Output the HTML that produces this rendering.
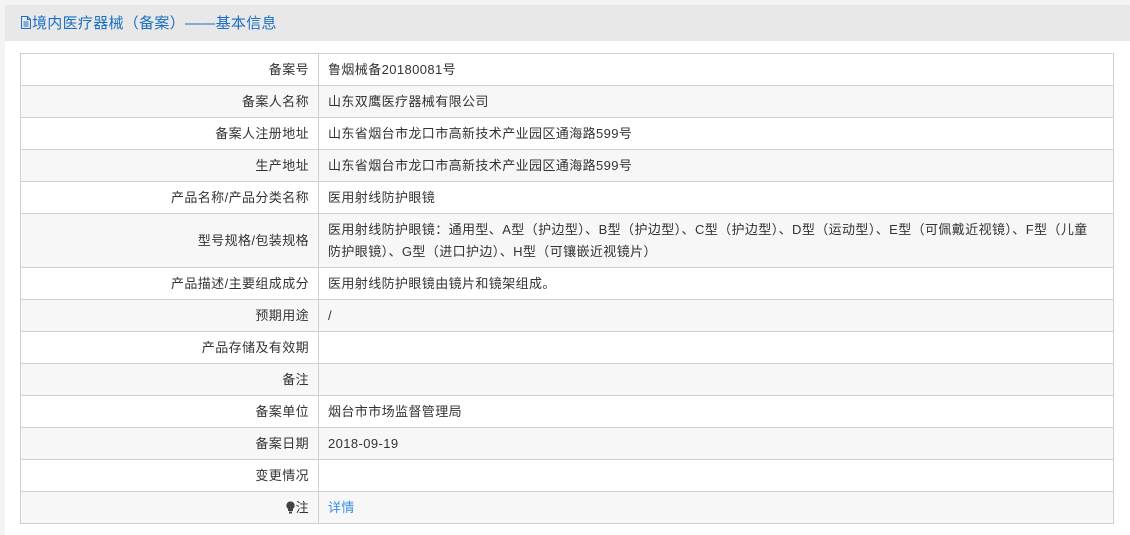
<!DOCTYPE html>
<html><head><meta charset="utf-8"><style>
body{margin:0;background:#f3f3f3;font-family:"Liberation Sans","Noto Sans CJK SC",sans-serif;font-size:13px;color:#333;width:1130px;height:529px;overflow:hidden}
.panel{position:absolute;left:5px;top:5px;width:1125px;height:530px;background:#fff}
.hd{height:36px;background:#e8e8e8;color:#1c6fc4;font-size:15px;line-height:38px;padding-left:15px;letter-spacing:0.3px}
table{position:absolute;left:15px;top:48px;width:1094px;border-collapse:collapse;letter-spacing:0.4px}
td{border:1px solid #d0d0d0;height:31px;padding:0 9px;line-height:22px}
td.l{width:279px;text-align:right}
tr:nth-child(even) td{background:#f7f7f7}
a{color:#3a8ee6;text-decoration:none}
</style></head><body>
<div class="panel">
<div class="hd"><svg width="12" height="13" viewBox="0 0 12 13" style="vertical-align:-1px"><path d="M1.5 .5h6l3 3v9h-9z M7.5 .5v3h3 M3.5 6h5 M3.5 8h5 M3.5 10h5" fill="none" stroke="#1c6fc4"/></svg>境内医疗器械（备案）——基本信息</div>
<table>
<tr><td class="l">备案号</td><td>鲁烟械备20180081号</td></tr>
<tr><td class="l">备案人名称</td><td>山东双鹰医疗器械有限公司</td></tr>
<tr><td class="l">备案人注册地址</td><td>山东省烟台市龙口市高新技术产业园区通海路599号</td></tr>
<tr><td class="l">生产地址</td><td>山东省烟台市龙口市高新技术产业园区通海路599号</td></tr>
<tr><td class="l">产品名称/产品分类名称</td><td>医用射线防护眼镜</td></tr>
<tr><td class="l" style="height:53px">型号规格/包装规格</td><td>医用射线防护眼镜：通用型、A型（护边型）、B型（护边型）、C型（护边型）、D型（运动型）、E型（可佩戴近视镜）、F型（儿童<br>防护眼镜）、G型（进口护边）、H型（可镶嵌近视镜片）</td></tr>
<tr><td class="l">产品描述/主要组成成分</td><td>医用射线防护眼镜由镜片和镜架组成。</td></tr>
<tr><td class="l">预期用途</td><td>/</td></tr>
<tr><td class="l">产品存储及有效期</td><td></td></tr>
<tr><td class="l">备注</td><td></td></tr>
<tr><td class="l">备案单位</td><td>烟台市市场监督管理局</td></tr>
<tr><td class="l">备案日期</td><td>2018-09-19</td></tr>
<tr><td class="l">变更情况</td><td></td></tr>
<tr><td class="l"><svg width="9" height="13" viewBox="0 0 9 13" style="vertical-align:-2px;margin-right:1px"><path d="M4.5 0.5a4 4 0 0 1 2.5 7.2v2.3h-5v-2.3a4 4 0 0 1 2.5-7.2z" fill="#444"/><rect x="3" y="10.5" width="3" height="2" fill="#444"/></svg>注</td><td><a>详情</a></td></tr>
</table>
</div>
</body></html>
